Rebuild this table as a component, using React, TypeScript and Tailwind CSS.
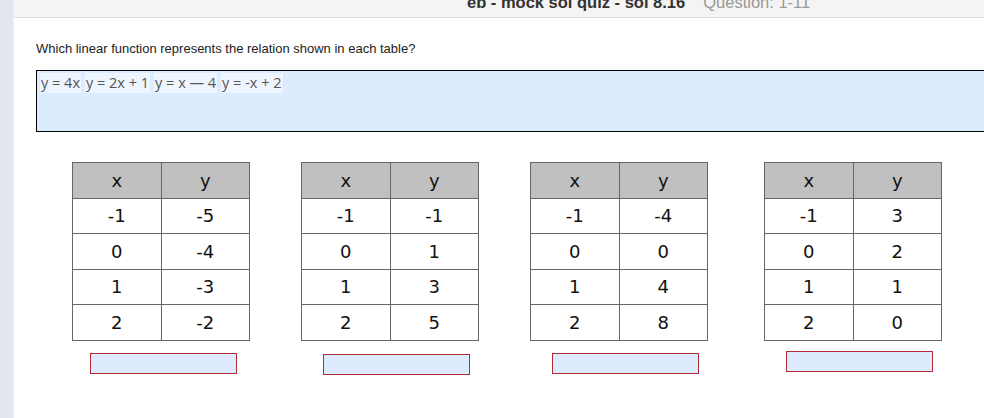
const tables = [
  { rows: [["-1", "-5"], ["0", "-4"], ["1", "-3"], ["2", "-2"]], ml: "ml-[58px]", box: "mt-[12px] ml-[18px]" },
  { rows: [["-1", "-1"], ["0", "1"], ["1", "3"], ["2", "5"]], ml: "ml-[51px]", box: "mt-[13px] ml-[22px]" },
  { rows: [["-1", "-4"], ["0", "0"], ["1", "4"], ["2", "8"]], ml: "ml-[51px]", box: "mt-[12px] ml-[22px]" },
  { rows: [["-1", "3"], ["0", "2"], ["1", "1"], ["2", "0"]], ml: "ml-[56px]", box: "mt-[10px] ml-[22px]" },
];

const chips = ["y = 4x", "y = 2x + 1", "y = x — 4", "y = -x + 2"];

function XYTable({ rows }: { rows: string[][] }) {
  return (
    <table className="w-[178px] table-fixed border-collapse text-[18px] text-[#111] [font-family:'DejaVu_Sans',Verdana,sans-serif]">
      <thead>
        <tr className="bg-[#c0c0c0]">
          <th className="h-[35.5px] border border-[#666] p-0 font-normal">x</th>
          <th className="h-[35.5px] border border-[#666] p-0 font-normal">y</th>
        </tr>
      </thead>
      <tbody>
        {rows.map((r, i) => (
          <tr key={i} className="bg-white">
            <td className="h-[35.5px] border border-[#666] p-0 text-center">{r[0]}</td>
            <td className="h-[35.5px] border border-[#666] p-0 text-center">{r[1]}</td>
          </tr>
        ))}
      </tbody>
    </table>
  );
}

export default function App() {
  return (
    <div className="flex h-[418px] w-[984px] overflow-hidden bg-white [font-family:Arial,'Liberation_Sans',sans-serif]">
      {/* left rail */}
      <div className="w-[13px] shrink-0 bg-[#e3e6ed]" />
      <div className="w-px shrink-0 bg-[#eef0f4]" />

      <div className="flex min-w-0 flex-1 flex-col">
        {/* header */}
        <div className="h-[18px] shrink-0 overflow-hidden border-b border-[#dcdcdc] bg-[#f4f4f4]">
          <div className="ml-[453px] -mt-[8px] flex gap-[18px] text-[16.5px] leading-[20px]">
            <span className="font-bold text-[#333]">eb - mock sol quiz - sol 8.16</span>
            <span className="text-[#999]">Question: 1-11</span>
          </div>
        </div>

        {/* question */}
        <p className="ml-[22px] mt-[24px] text-[13px] leading-[14px] text-[#222]">
          Which linear function represents the relation shown in each table?
        </p>

        {/* answer bank */}
        <div className="ml-[22px] mt-[14px] h-[62px] w-[960px] shrink-0 border border-black bg-[#dcebfd] px-[3px] pt-[2px]">
          <div className="flex gap-[4px] text-[14.5px] leading-[20px] text-[#555] [font-family:'Open_Sans','DejaVu_Sans',sans-serif]">
            {chips.map((c) => (
              <span key={c} className="bg-[#eef5fe] px-[1px]">{c}</span>
            ))}
          </div>
        </div>

        {/* tables */}
        <div className="mt-[30px] flex">
          {tables.map((t, i) => (
            <div key={i} className={`flex flex-col ${t.ml}`}>
              <XYTable rows={t.rows} />
              <div className={`h-[21px] w-[147px] border border-[#b52a35] bg-[#dcebfd] ${t.box}`} />
            </div>
          ))}
        </div>
      </div>
    </div>
  );
}
